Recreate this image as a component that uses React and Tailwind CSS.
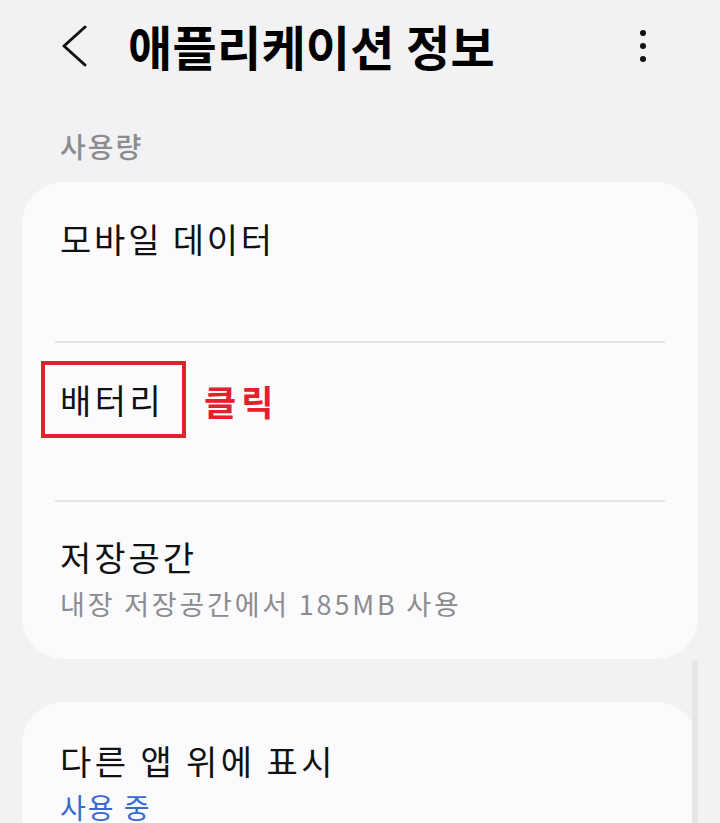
export default function App() {
  const font = { fontFamily: '"Noto Sans CJK KR", "Noto Sans", sans-serif' };
  return (
    <div className="w-[720px] h-[823px] overflow-hidden bg-[#f2f2f4] relative" style={font}>
      {/* Header */}
      <div className="h-[92px] flex items-center">
        <div className="w-[128px] flex items-center pl-[61px]">
          <svg width="26" height="42" viewBox="0 0 26 42" fill="none">
            <path d="M24 2 L3 21 L24 40" stroke="#111" strokeWidth="3" strokeLinecap="round" strokeLinejoin="round" />
          </svg>
        </div>
        <div className="flex-1 text-[48px] font-bold text-black tracking-[0.3px] leading-none -mt-[2px]">
          애플리케이션 정보
        </div>
        <div className="w-[80px] flex flex-col items-start gap-[7px]">
          <span className="block w-[6px] h-[6px] rounded-full bg-[#111]" />
          <span className="block w-[6px] h-[6px] rounded-full bg-[#111]" />
          <span className="block w-[6px] h-[6px] rounded-full bg-[#111]" />
        </div>
      </div>

      {/* Section label */}
      <div className="pl-[60px] pt-[40px] h-[90px] text-[28px] font-medium text-[#8c8c90] leading-none tracking-[2px]">
        사용량
      </div>

      {/* Card 1 */}
      <div className="mx-[22px] bg-[#fbfbfd] rounded-[42px] h-[477px] flex flex-col">
        <div className="h-[159px] px-[38px] pt-[35px]">
          <div className="text-[34px] leading-[44px] text-[#111] tracking-[2.8px]">모바일 데이터</div>
        </div>
        <div className="mx-[33px] h-[2px] bg-[#e4e4e6]" />
        <div className="h-[157px] px-[38px] pt-[35px] relative">
          <div className="text-[34px] leading-[44px] text-[#111] tracking-[3.5px]">배터리</div>
          <div className="absolute left-[19px] top-[18px] w-[145px] h-[77px] border-[4px] border-[#e3212b]" />
          <div className="absolute left-[182px] top-[36px] text-[35px] leading-[44px] font-bold text-[#e3212b] tracking-[5px]">클릭</div>
        </div>
        <div className="mx-[33px] h-[2px] bg-[#e4e4e6]" />
        <div className="flex-1 px-[38px] pt-[33px]">
          <div className="text-[34px] leading-[44px] text-[#111] tracking-[3px]">저장공간</div>
          <div className="text-[27px] leading-[34px] text-[#8c8c90] mt-[8px] tracking-[2.8px]">내장 저장공간에서 185MB 사용</div>
        </div>
      </div>

      {/* Card 2 */}
      <div className="mx-[22px] mt-[43px] bg-[#fbfbfd] rounded-[42px] h-[200px] px-[38px] pt-[37px]">
        <div className="text-[34px] leading-[44px] text-[#111] tracking-[3.4px]">다른 앱 위에 표시</div>
        <div className="text-[28px] leading-[36px] text-[#3a6bcc] mt-[6px] tracking-[2px]">사용 중</div>
      </div>

      {/* Scrollbar */}
      <div className="absolute left-[692px] top-[660px] w-[6px] h-[200px] rounded-full bg-[#e6e6e8]" />
    </div>
  );
}
